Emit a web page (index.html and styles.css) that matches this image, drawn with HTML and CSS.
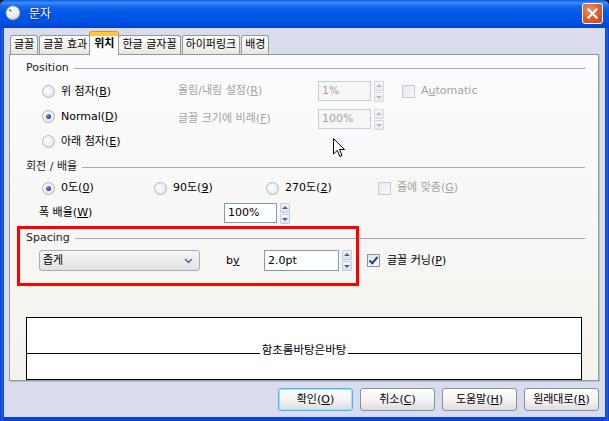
FILE: index.html
```html
<!DOCTYPE html>
<html lang="ko">
<head>
    <meta charset="UTF-8">
    <title>문자</title>
    <link rel="stylesheet" href="styles.css">
</head>
<body>
    <div class="window">
        <div class="titlebar">
            <svg class="app-icon" width="16" height="16" viewBox="0 0 16 16">
                <defs>
                    <radialGradient id="ball" cx="0.4" cy="0.35" r="0.7">
                        <stop offset="0" stop-color="#ffffff"/>
                        <stop offset="0.7" stop-color="#e4e6ea"/>
                        <stop offset="1" stop-color="#9aa0aa"/>
                    </radialGradient>
                </defs>
                <circle cx="8" cy="8" r="7.2" fill="url(#ball)" stroke="#6b7280" stroke-width="0.6"/>
                <path d="M3.5 6.5 C5 5.2 6.5 5.4 8 6.6 C6.6 6.2 5.2 6.4 3.5 6.5 Z" fill="#2b2f38"/>
                <path d="M4.2 4.4 L5.6 5.6" stroke="#2b2f38" stroke-width="1"/>
            </svg>
            <span class="title">문자</span>
            <div class="close-btn">
                <svg width="11" height="11" viewBox="0 0 11 11">
                    <path d="M1.5 1.5 L9.5 9.5 M9.5 1.5 L1.5 9.5" stroke="#fff" stroke-width="2.2" stroke-linecap="square"/>
                </svg>
            </div>
        </div>

        <div class="client">
            <div class="tabs">
                <div class="tab">글꼴</div>
                <div class="tab">글꼴 효과</div>
                <div class="tab active">위치</div>
                <div class="tab">한글 글자꼴</div>
                <div class="tab">하이퍼링크</div>
                <div class="tab">배경</div>
            </div>

            <div class="page">
                <!-- Position -->
                <div class="group-head"><span>Position</span></div>
                <div class="pos-body">
                    <div class="pos-radios">
                        <div class="opt"><span class="radio"></span>위 첨자(<u>B</u>)</div>
                        <div class="opt"><span class="radio on"></span>Normal(<u>D</u>)</div>
                        <div class="opt"><span class="radio"></span>아래 첨자(<u>E</u>)</div>
                    </div>
                    <div class="pos-fields">
                        <span class="dim">올림/내림 설정(<u>R</u>)</span>
                        <span class="field off">1%</span>
                        <span class="spin off"><i class="up"></i><i class="down"></i></span>
                        <div class="opt dim auto"><span class="check off"></span>A<u>u</u>tomatic</div>
                        <span class="dim">글꼴 크기에 비례(<u>F</u>)</span>
                        <span class="field off">100%</span>
                        <span class="spin off"><i class="up"></i><i class="down"></i></span>
                    </div>
                </div>

                <!-- 회전 / 배율 -->
                <div class="group-head rot-head"><span>회전 / 배율</span></div>
                <div class="rot-row">
                    <div class="opt rot-item"><span class="radio on"></span>0도(<u>0</u>)</div>
                    <div class="opt rot-item"><span class="radio"></span>90도(<u>9</u>)</div>
                    <div class="opt rot-item"><span class="radio"></span>270도(<u>2</u>)</div>
                    <div class="opt dim"><span class="check off"></span>줄에 맞춤(<u>G</u>)</div>
                </div>
                <div class="scale-row">
                    <span class="scale-label">폭 배율(<u>W</u>)</span>
                    <span class="field">100%</span>
                    <span class="spin"><i class="up"></i><i class="down"></i></span>
                </div>

                <!-- Spacing -->
                <div class="group-head spacing-head"><span>Spacing</span></div>
                <div class="spacing-row">
                    <div class="dropdown">
                        <span>좁게</span>
                        <svg width="9" height="6" viewBox="0 0 9 6">
                            <path d="M1 1 L4.5 4.5 L8 1" fill="none" stroke="#4d6185" stroke-width="1.4"/>
                        </svg>
                    </div>
                    <span class="by-label">b<u>y</u></span>
                    <span class="field wide">2.0pt</span>
                    <span class="spin"><i class="up"></i><i class="down"></i></span>
                    <div class="opt kerning"><span class="check on"></span>글꼴 커닝(<u>P</u>)</div>
                </div>

                <!-- 미리보기 -->
                <div class="preview">
                    <div class="preview-top"><span class="preview-text">함초롬바탕은바탕</span></div>
                    <div class="preview-bottom"></div>
                </div>

                <div class="annot"></div>
                <svg class="cursor" width="12" height="20" viewBox="0 0 12 20">
                    <path d="M0.5 0.5 L0.5 16 L4.3 12.4 L6.8 18.4 L9 17.4 L6.5 11.5 L11.5 11.5 Z" fill="#fff" stroke="#000" stroke-width="1"/>
                </svg>
            </div>

            <div class="buttons">
                <div class="button default">확인(<u>O</u>)</div>
                <div class="button">취소(<u>C</u>)</div>
                <div class="button">도움말(<u>H</u>)</div>
                <div class="button">원래대로(<u>R</u>)</div>
            </div>
        </div>
    </div>
</body>
</html>
```

FILE: styles.css
```css
body, html {
    margin: 0;
    padding: 0;
    width: 609px;
    height: 421px;
    overflow: hidden;
    background-color: #1a1f2e;
    font-family: "DejaVu Sans", "Noto Sans CJK KR", sans-serif;
    font-size: 11px;
    line-height: 14px;
    color: #000;
}

u {
    text-decoration: underline;
    text-underline-offset: 1px;
}

.window {
    display: flex;
    flex-direction: column;
    width: 609px;
    height: 421px;
    box-sizing: border-box;
    background: linear-gradient(to right, #0a3ccf 0, #1f5fe6 2px, #0b43d6 4px, #0b43d6 605px, #1f5fe6 607px, #0a3ccf 609px);
    border-radius: 6px 6px 0 0;
    overflow: hidden;
}

/* 标题栏 */
.titlebar {
    display: flex;
    align-items: flex-start;
    height: 28px;
    padding: 0 6px 0 5px;
    background: linear-gradient(to bottom, #0a5ce6 0%, #3d8ff8 10%, #1a67ec 22%, #0058e8 45%, #0054e3 75%, #0049d6 92%, #0a3fc0 100%);
}

.app-icon {
    margin-top: 5px;
}

.title {
    margin: 7px 0 0 8px;
    font-size: 12px;
    color: #fff;
    text-shadow: 1px 1px 0 #0a2a8a;
    flex: 1;
}

.close-btn {
    display: flex;
    align-items: center;
    justify-content: center;
    width: 21px;
    height: 21px;
    margin-top: 3px;
    box-sizing: border-box;
    border: 1px solid #fff;
    border-radius: 3px;
    background: radial-gradient(circle at 35% 30%, #f0936c 0%, #e35f35 45%, #c8401a 100%);
}

/* 客户区 */
.client {
    display: flex;
    flex-direction: column;
    flex: 1;
    margin: 0 4px 4px 4px;
    padding: 4px 6px 0 5px;
    background-color: #d8dcec;
}

.tabs {
    display: flex;
    align-items: flex-end;
    height: 22px;
    padding-left: 1px;
}

.tab {
    height: 19px;
    padding: 0 3px;
    box-sizing: border-box;
    border: 1px solid #919b9c;
    border-bottom: none;
    border-radius: 3px 3px 0 0;
    background: linear-gradient(to bottom, #ffffff, #f0f0ea 70%, #e6e5de);
    line-height: 17px;
    white-space: nowrap;
}

.tab + .tab {
    margin-left: 1px;
}

.tab.active {
    position: relative;
    z-index: 1;
    height: 23px;
    margin: 0 -2px -1px -2px;
    padding: 0 4px;
    border-top: 3px solid #ffc73c;
    box-shadow: inset 0 1px 0 #ffc73c, 0 -1px 0 #e68b2c;
    background: #fcfcfe;
    font-weight: bold;
    line-height: 18px;
}

/* 选项卡页 */
.page {
    position: relative;
    display: flex;
    flex-direction: column;
    flex: 1;
    padding: 6px 13px 0 16px;
    border: 1px solid #919b9c;
    background: linear-gradient(to bottom, #fcfcfe, #f3f2ed);
    box-shadow: 1px 1px 0 #bcc1d0;
}

.group-head {
    display: flex;
    align-items: center;
    height: 14px;
    color: #222;
}

.group-head::after {
    content: "";
    flex: 1;
    margin-left: 5px;
    border-top: 1px solid #a3aab8;
}

.rot-head {
    margin-top: 6px;
}

.spacing-head {
    margin-top: 8px;
}

.dim {
    color: #a3a3a3;
}

.opt {
    display: flex;
    align-items: center;
    white-space: nowrap;
}

.radio, .check {
    display: inline-block;
    width: 13px;
    height: 13px;
    margin-right: 6px;
    box-sizing: border-box;
    flex-shrink: 0;
}

.radio {
    border: 1px solid #b1b9c6;
    border-radius: 50%;
    background: radial-gradient(circle at 40% 40%, #ffffff 0%, #eceef2 55%, #d3d7de 100%);
    position: relative;
}

.radio.on::after {
    content: "";
    position: absolute;
    left: 3px;
    top: 3px;
    width: 5px;
    height: 5px;
    border-radius: 50%;
    background: radial-gradient(circle at 35% 35%, #8d9fe0 0%, #3a4fae 50%, #1c2a78 100%);
}

.check {
    border: 1px solid #8594ad;
    background: linear-gradient(135deg, #dde2ea, #ffffff);
    position: relative;
}

.check.off {
    border-color: #c6cad2;
    background: linear-gradient(135deg, #e6e9ee, #f8f9fa);
}

.check.on::after {
    content: "";
    position: absolute;
    left: 3px;
    top: 0px;
    width: 3px;
    height: 7px;
    border: solid #2f3f86;
    border-width: 0 2px 2px 0;
    transform: rotate(40deg);
}

/* 文本框与微调按钮 */
.field {
    display: flex;
    align-items: center;
    width: 53px;
    height: 20px;
    padding-left: 3px;
    box-sizing: border-box;
    border: 1px solid #7f9db9;
    background: #fff;
}

.field.off {
    border-color: #bcd0e8;
    background: #f6f6f4;
    color: #a3a3a3;
}

.field.wide {
    width: 75px;
    height: 21px;
}

.spin {
    display: flex;
    flex-direction: column;
    justify-content: center;
    gap: 1px;
    margin-left: 3px;
}

.spin i {
    position: relative;
    display: block;
    width: 8px;
    height: 8px;
    border: 1px solid #c2cde0;
    border-radius: 1px;
    background: linear-gradient(to bottom, #f4f7fc, #d9e2f1);
}

.spin i::after {
    content: "";
    position: absolute;
    left: 1px;
    border-left: 3px solid transparent;
    border-right: 3px solid transparent;
}

.spin i.up::after {
    top: 2px;
    border-bottom: 3px solid #4d6185;
}

.spin i.down::after {
    top: 3px;
    border-top: 3px solid #4d6185;
}

.spin.off i {
    border-color: #d4d8de;
    background: linear-gradient(to bottom, #f8f8f8, #eaeaea);
}

.spin.off i.up::after {
    border-bottom-color: #b8bcc4;
}

.spin.off i.down::after {
    border-top-color: #b8bcc4;
}

/* Position 区 */
.pos-body {
    display: flex;
    margin-top: 4px;
}

.pos-radios {
    display: flex;
    flex-direction: column;
    width: 136px;
    margin-left: 16px;
}

.pos-radios .opt {
    height: 25px;
}

.pos-fields {
    display: grid;
    grid-template-columns: 140px 53px 12px auto;
    grid-auto-rows: 20px;
    row-gap: 8px;
    align-items: center;
    margin-top: 2px;
}

.pos-fields .auto {
    margin-left: 19px;
}

/* 旋转 */
.rot-row {
    display: flex;
    height: 24px;
    margin: 2px 0 0 16px;
}

.rot-item {
    width: 112px;
}

.scale-row {
    display: flex;
    align-items: center;
    height: 20px;
    margin: 3px 0 0 13px;
}

.scale-label {
    width: 185px;
}

/* 间距 */
.spacing-row {
    display: flex;
    align-items: center;
    height: 21px;
    margin: 5px 0 0 13px;
}

.dropdown {
    display: flex;
    align-items: center;
    justify-content: space-between;
    width: 161px;
    height: 21px;
    padding: 0 6px 0 3px;
    box-sizing: border-box;
    border: 1px solid #a7aeb8;
    border-radius: 3px;
    background: linear-gradient(to bottom, #f6f6f6, #e2e2e2);
}

.by-label {
    width: 38px;
    margin-left: 26px;
}

.kerning {
    margin-left: 15px;
}

.kerning .check {
    margin-right: 7px;
}

/* 预览 */
.preview {
    display: flex;
    flex-direction: column;
    height: 63px;
    margin: auto 3px 0 0;
    box-sizing: border-box;
    border: 1px solid #000;
    background: #fff;
}

.preview-top {
    display: flex;
    align-items: flex-end;
    justify-content: center;
    height: 35px;
    border-bottom: 1px solid #000;
}

.preview-text {
    margin-bottom: -4px;
    padding: 0 2px;
    background: #fff;
    font-family: "Noto Sans CJK KR", sans-serif;
    font-size: 11.5px;
    line-height: 15px;
}

.preview-bottom {
    flex: 1;
}

/* 标注框和鼠标 */
.annot {
    position: absolute;
    left: 7px;
    top: 171px;
    width: 342px;
    height: 60px;
    box-sizing: border-box;
    border: 3px solid #ff0000;
}

.cursor {
    position: absolute;
    left: 323px;
    top: 83px;
}

/* 底部按钮 */
.buttons {
    display: flex;
    justify-content: flex-end;
    gap: 7px;
    height: 36px;
    padding-top: 7px;
    box-sizing: border-box;
}

.button {
    display: flex;
    align-items: center;
    justify-content: center;
    width: 75px;
    height: 23px;
    box-sizing: border-box;
    border: 1px solid #8a8f99;
    border-radius: 3px;
    background: linear-gradient(to bottom, #ffffff, #f1f1f1 60%, #dcdcdc);
}

.button.default {
    border-color: #4fb4e6;
    box-shadow: inset 0 0 0 1px #a9dcf5;
}
```
